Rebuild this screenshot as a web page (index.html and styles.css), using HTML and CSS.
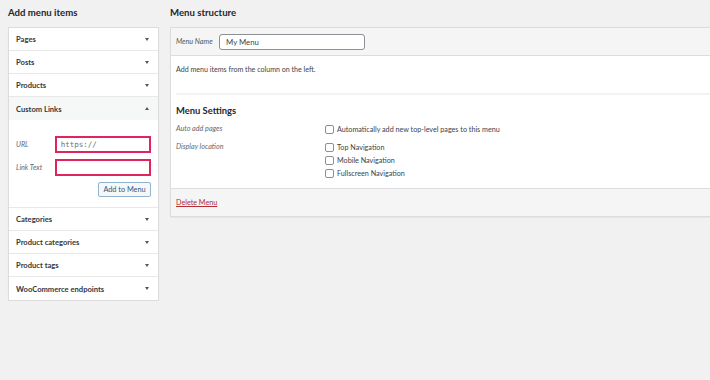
FILE: index.html
```html
<!DOCTYPE html>
<html lang="en">
<head>
    <meta charset="UTF-8">
    <title>Menus</title>
    <link rel="stylesheet" href="styles.css">
</head>
<body>
    <div class="wrap">
        <div class="side">
            <h2 class="title">Add menu items</h2>
            <div class="box">
                <div class="row"><span>Pages</span><i class="arrow"></i></div>
                <div class="row"><span>Posts</span><i class="arrow"></i></div>
                <div class="row"><span>Products</span><i class="arrow"></i></div>
                <div class="row open"><span>Custom Links</span><i class="arrow up"></i></div>
                <div class="links">
                    <div class="field">
                        <label>URL</label>
                        <div class="input red">https://</div>
                    </div>
                    <div class="field">
                        <label>Link Text</label>
                        <div class="input red"></div>
                    </div>
                    <div class="btn_line">
                        <button class="btn">Add to Menu</button>
                    </div>
                </div>
                <div class="row"><span>Categories</span><i class="arrow"></i></div>
                <div class="row"><span>Product categories</span><i class="arrow"></i></div>
                <div class="row"><span>Product tags</span><i class="arrow"></i></div>
                <div class="row last"><span>WooCommerce endpoints</span><i class="arrow"></i></div>
            </div>
        </div>

        <div class="main">
            <h2 class="title">Menu structure</h2>
            <div class="panel">
                <div class="panel_head">
                    <label class="name_label">Menu Name</label>
                    <div class="name_input">My Menu</div>
                </div>
                <div class="panel_body">
                    <p class="hint">Add menu items from the column on the left.</p>
                    <div class="settings">
                        <h3>Menu Settings</h3>
                        <div class="set_row">
                            <div class="set_label">Auto add pages</div>
                            <div class="set_opts">
                                <div class="check"><span class="cb"></span>Automatically add new top-level pages to this menu</div>
                            </div>
                        </div>
                        <div class="set_row">
                            <div class="set_label">Display location</div>
                            <div class="set_opts">
                                <div class="check"><span class="cb"></span>Top Navigation</div>
                                <div class="check"><span class="cb"></span>Mobile Navigation</div>
                                <div class="check"><span class="cb"></span>Fullscreen Navigation</div>
                            </div>
                        </div>
                    </div>
                </div>
                <div class="panel_foot">
                    <a href="#" class="delete">Delete Menu</a>
                </div>
            </div>
        </div>
    </div>
</body>
</html>
```

FILE: styles.css
```css
*{
    box-sizing: border-box;
}

body{
    margin: 0;
    background-color: #f1f1f1;
    font-family: Lato, "Open Sans", sans-serif;
    color: #23282d;
    overflow: hidden;
}

.wrap{
    display: flex;
    padding-left: 8px;
    gap: 11px;
}

.title{
    margin: 0;
    height: 27px;
    padding-top: 6px;
    font-size: 9.6px;
    font-weight: 700;
    line-height: 14px;
    color: #23282d;
}

/* left column */
.side{
    width: 151px;
    flex: none;
}

.box{
    background-color: #fff;
    border: 1px solid #dcdcde;
    box-shadow: 0 1px 1px rgba(0,0,0,.06);
}

.row{
    height: 23px;
    display: flex;
    align-items: center;
    justify-content: space-between;
    padding: 0 9px 0 7px;
    border-bottom: 1px solid #e8e8e8;
    font-size: 7.6px;
    font-weight: 700;
    color: #32373c;
}

.row.last{
    border-bottom: none;
}

.row.open{
    background-color: #f6f7f7;
    border-bottom: none;
}

.arrow{
    width: 0;
    height: 0;
    border-left: 2.5px solid transparent;
    border-right: 2.5px solid transparent;
    border-top: 3px solid #50575e;
}

.arrow.up{
    border-top: none;
    border-bottom: 3px solid #50575e;
}

.links{
    height: 88px;
    padding: 16px 7px 0 7px;
    border-bottom: 1px solid #e8e8e8;
}

.field{
    display: flex;
    align-items: center;
    margin-bottom: 6px;
}

.field label{
    width: 39px;
    font-size: 7.2px;
    font-style: italic;
    color: #646970;
}

.input{
    width: 97px;
    height: 17px;
    border: 2px solid #e0245e;
    background-color: #fff;
    font-family: "DejaVu Sans Mono", monospace;
    font-size: 7.5px;
    color: #6c7176;
    padding: 2px 0 0 4px;
    line-height: 10px;
}

.btn_line{
    display: flex;
    justify-content: flex-end;
    margin-top: 1px;
}

.btn{
    height: 15px;
    width: 53px;
    padding: 0;
    font-family: inherit;
    font-size: 7.3px;
    color: #2c5a84;
    background-color: #f6f7f7;
    border: 1px solid #8fb3d3;
    border-radius: 2px;
}

/* right column */
.main{
    flex: 1;
    margin-right: -2px;
}

.panel{
    background-color: #fff;
    border: 1px solid #dcdcde;
    box-shadow: 0 1px 1px rgba(0,0,0,.04);
}

.panel_head{
    height: 28px;
    display: flex;
    align-items: center;
    padding-left: 5px;
    background-color: #f5f5f5;
    border-bottom: 1px solid #dcdcde;
}

.name_label{
    font-size: 7.2px;
    font-style: italic;
    color: #50575e;
    width: 43px;
}

.name_input{
    width: 146px;
    height: 16px;
    border: 1px solid #8c8f94;
    border-radius: 3px;
    background-color: #fff;
    font-size: 7.8px;
    line-height: 14px;
    padding-left: 6px;
    color: #3c434a;
}

.panel_body{
    padding: 0 0 0 5px;
}

.hint{
    margin: 0;
    padding-top: 9px;
    height: 39px;
    font-size: 7.1px;
    line-height: 10px;
    color: #3c434a;
    border-bottom: 2px solid #f3f3f3;
}

.settings{
    padding: 9px 0 8px 0;
}

.settings h3{
    margin: 0 0 5px 0;
    font-size: 9.4px;
    font-weight: 700;
    line-height: 14px;
    color: #23282d;
}

.set_row{
    display: flex;
    margin-bottom: 5px;
}

.set_row:last-child{
    margin-bottom: 0;
}

.set_label{
    width: 149px;
    font-size: 7.2px;
    font-style: italic;
    color: #646970;
    line-height: 12px;
}

.check{
    display: flex;
    align-items: center;
    height: 13px;
    font-size: 7.2px;
    color: #3c434a;
}

.cb{
    width: 9px;
    height: 9px;
    border: 1px solid #8c8f94;
    border-radius: 2px;
    background-color: #fff;
    margin-right: 3px;
}

.panel_foot{
    height: 28px;
    background-color: #f5f5f5;
    border-top: 1px solid #dcdcde;
    padding: 9px 0 0 5px;
    font-size: 7.2px;
    line-height: 10px;
}

.delete{
    color: #b32d2e;
    text-decoration: underline;
}
```
